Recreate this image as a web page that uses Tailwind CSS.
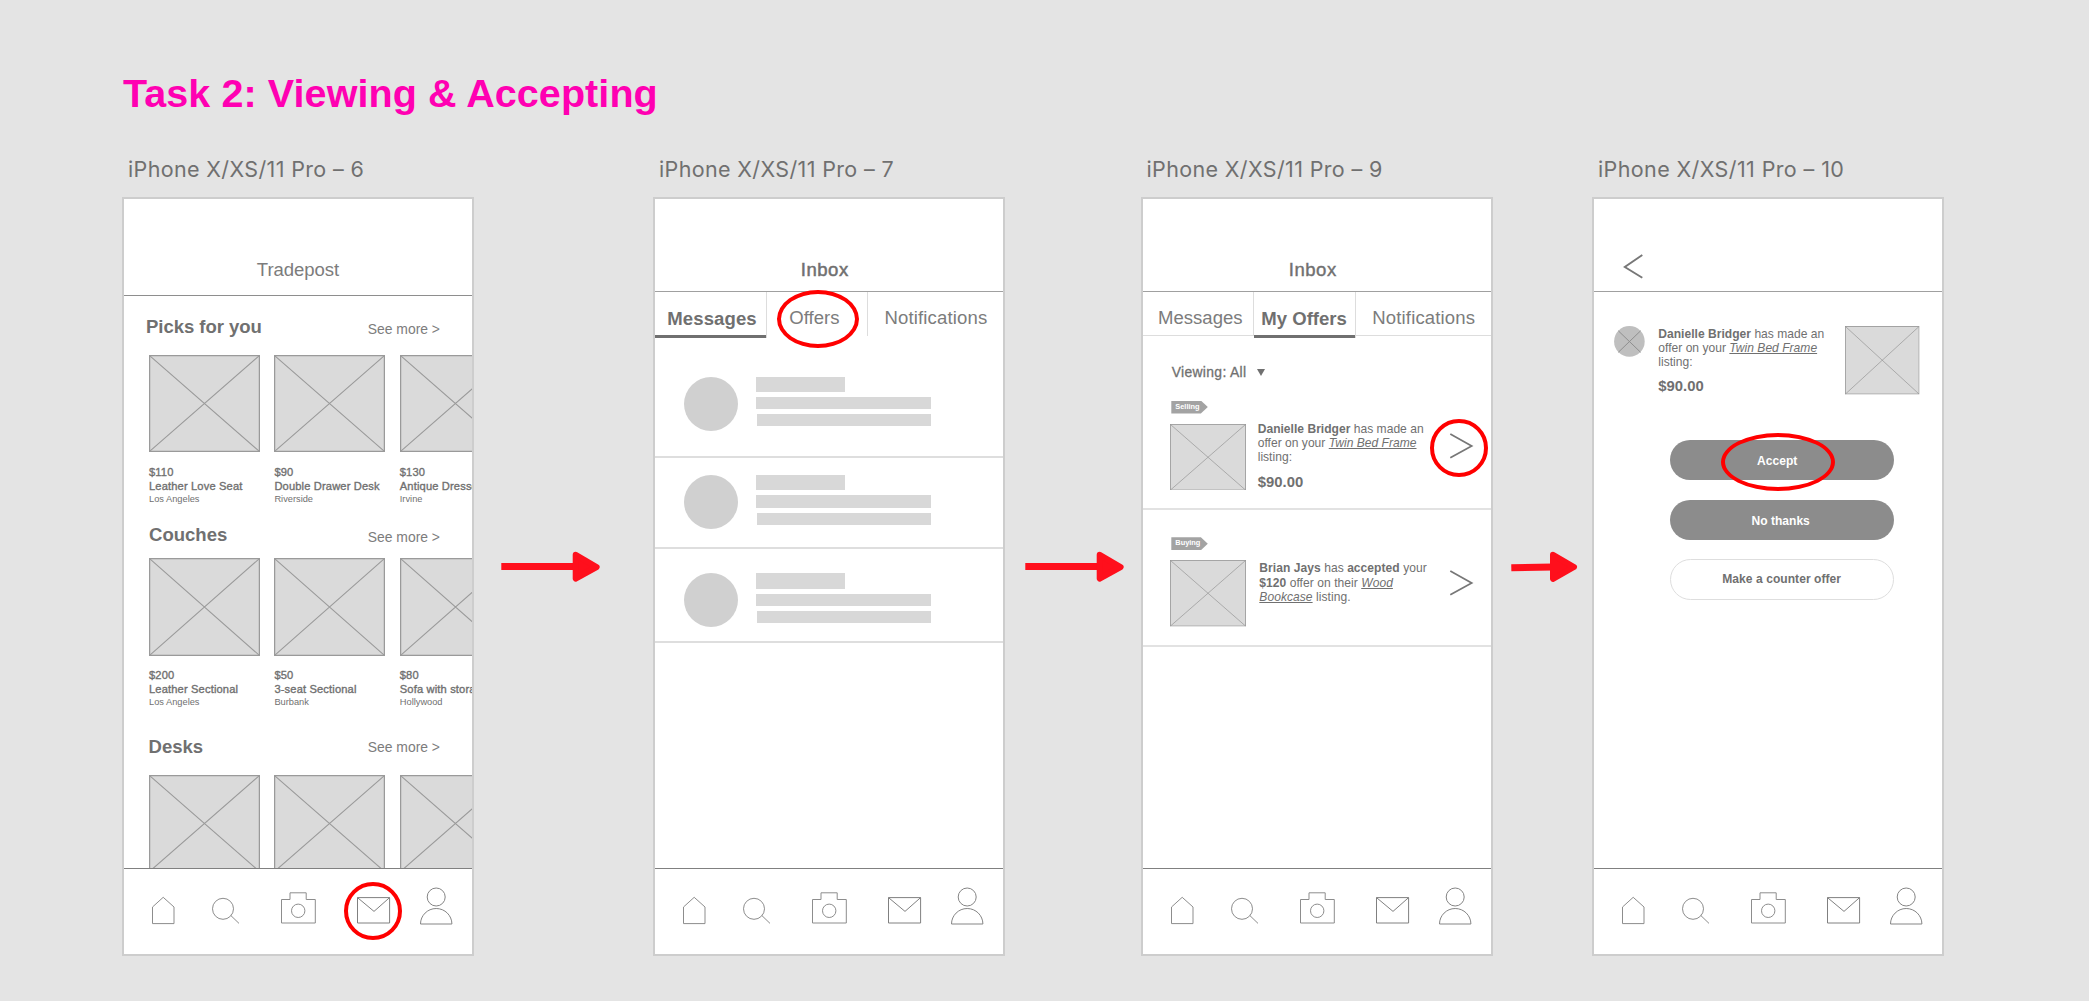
<!DOCTYPE html>
<html lang="en">
<head>
<meta charset="utf-8">
<title>Task 2: Viewing &amp; Accepting</title>
<script src="https://cdn.jsdelivr.net/npm/@tailwindcss/browser@4"></script>
</head>
<body class="w-[2089px] h-[1001px] overflow-hidden bg-[#e4e4e4] font-['Liberation_Sans',Arial,sans-serif] text-[#707070]">

<!-- shared shapes -->
<svg class="hidden">
  <symbol id="thumb" viewBox="0 0 111 97" preserveAspectRatio="none">
    <rect x=".6" y=".6" width="109.8" height="95.8" fill="#dadada" stroke="#9a9a9a" stroke-width="1.3"/>
    <path d="M.6 .6 110.4 96.4M110.4 .6 .6 96.4" stroke="#9a9a9a" stroke-width="1.1"/>
  </symbol>
  <symbol id="home" viewBox="26 16 26 44"><path d="M28.5 39 39.2 29.3 50 39V55.6H28.5Z" fill="none" stroke="#8d8d8d"/></symbol>
  <symbol id="search" viewBox="86 16 32 44"><g fill="none" stroke="#8d8d8d"><circle cx="99" cy="40.8" r="10.5"/><path d="M106.7 47.4 115 55.4"/></g></symbol>
  <symbol id="camera" viewBox="156 16 37 44"><g fill="none" stroke="#8d8d8d"><path d="M157.5 31.5H166V24.8H182.2V31.5H191.3V55H157.5Z"/><circle cx="174.2" cy="42.8" r="6.7"/></g></symbol>
  <symbol id="mail" viewBox="232 16 35 44"><path d="M233.5 29.6H265.6V55H233.5ZL250 43.4 265.6 29.6" fill="none" stroke="#808080"/></symbol>
  <symbol id="person" viewBox="295 16 34 44"><g fill="none" stroke="#858585"><circle cx="312.2" cy="29" r="9"/><path d="M296.5 56C296.5 47.5 303.5 40.5 312.2 40.5S327.9 47.5 327.9 56Z"/></g></symbol>
  <symbol id="chevron" viewBox="0 0 26 32"><path d="M2.3 4 23.7 16 2.3 27.7" fill="none" stroke="#777" stroke-width="1.7"/></symbol>
</svg>

<h1 class="mt-[69px] ml-[123px] text-[39.5px] leading-[48px] font-bold tracking-[0.08px] text-[#ff00b2]">Task 2: Viewing &amp; Accepting</h1>

<main class="mt-[38px] ml-[122px] flex items-start">

  <!-- artboard 6: home feed -->
  <section class="w-[352px] shrink-0">
    <h2 class="ml-[6px] whitespace-nowrap font-[Inter,sans-serif] text-[21.5px] leading-[28px] tracking-[0.36px]">iPhone X/XS/11 Pro – 6</h2>
    <div class="relative mt-[14px] flex h-[759px] flex-col border-2 border-[#cdcdcd] bg-white">
      <header class="h-[97px] shrink-0 border-b border-[#8e8e8e] pt-[59px] text-center text-[18.56px] leading-[24px] tracking-[-0.05px] text-[#7c7c7c]">Tradepost</header>
      <div class="min-h-0 flex-1 overflow-hidden">
        <div class="mt-[19px] flex h-[40px] justify-between pl-[22px] pr-[32px] leading-[24px]">
          <h3 class="text-[18.56px] font-bold tracking-[-0.05px]">Picks for you</h3><span class="pt-[2px] text-[13.92px] text-[#7c7c7c]">See more &gt;</span>
        </div>
        <div class="flex gap-[14.4px] pl-[25px] whitespace-nowrap text-[11.14px] leading-[14px] tracking-[0.15px]">
          <div class="w-[111px] shrink-0"><svg class="mb-[13px] block h-[97px] w-[111px]"><use href="#thumb"/></svg><p class="[-webkit-text-stroke:0.35px]">$110</p><p class="[-webkit-text-stroke:0.35px]">Leather Love Seat</p><p class="text-[9.28px] leading-[12px] tracking-normal">Los Angeles</p></div>
          <div class="w-[111px] shrink-0"><svg class="mb-[13px] block h-[97px] w-[111px]"><use href="#thumb"/></svg><p class="[-webkit-text-stroke:0.35px]">$90</p><p class="[-webkit-text-stroke:0.35px]">Double Drawer Desk</p><p class="text-[9.28px] leading-[12px] tracking-normal">Riverside</p></div>
          <div class="w-[111px] shrink-0"><svg class="mb-[13px] block h-[97px] w-[111px]"><use href="#thumb"/></svg><p class="[-webkit-text-stroke:0.35px]">$130</p><p class="[-webkit-text-stroke:0.35px]">Antique Dresser</p><p class="text-[9.28px] leading-[12px] tracking-normal">Irvine</p></div>
        </div>
        <div class="mt-[18px] flex h-[35px] justify-between pl-[25px] pr-[32px] leading-[24px]">
          <h3 class="text-[18.56px] font-bold">Couches</h3><span class="pt-[2px] text-[13.92px] text-[#7c7c7c]">See more &gt;</span>
        </div>
        <div class="flex gap-[14.4px] pl-[25px] whitespace-nowrap text-[11.14px] leading-[14px] tracking-[0.15px]">
          <div class="w-[111px] shrink-0"><svg class="mb-[12px] block h-[98px] w-[111px]"><use href="#thumb"/></svg><p class="[-webkit-text-stroke:0.35px]">$200</p><p class="[-webkit-text-stroke:0.35px]">Leather Sectional</p><p class="text-[9.28px] leading-[12px] tracking-normal">Los Angeles</p></div>
          <div class="w-[111px] shrink-0"><svg class="mb-[12px] block h-[98px] w-[111px]"><use href="#thumb"/></svg><p class="[-webkit-text-stroke:0.35px]">$50</p><p class="[-webkit-text-stroke:0.35px]">3-seat Sectional</p><p class="text-[9.28px] leading-[12px] tracking-normal">Burbank</p></div>
          <div class="w-[111px] shrink-0"><svg class="mb-[12px] block h-[98px] w-[111px]"><use href="#thumb"/></svg><p class="[-webkit-text-stroke:0.35px]">$80</p><p class="[-webkit-text-stroke:0.35px]">Sofa with storage</p><p class="text-[9.28px] leading-[12px] tracking-normal">Hollywood</p></div>
        </div>
        <div class="mt-[27px] flex h-[40px] justify-between pl-[24.5px] pr-[32px] leading-[24px]">
          <h3 class="text-[18.56px] font-bold">Desks</h3><span class="text-[13.92px] text-[#7c7c7c]">See more &gt;</span>
        </div>
        <div class="flex gap-[14.4px] pl-[25px]">
          <svg class="block h-[97px] w-[111px] shrink-0"><use href="#thumb"/></svg>
          <svg class="block h-[97px] w-[111px] shrink-0"><use href="#thumb"/></svg>
          <svg class="block h-[97px] w-[111px] shrink-0"><use href="#thumb"/></svg>
        </div>
      </div>
      <nav class="flex h-[86px] shrink-0 border-t border-[#808080] pt-[15px]">
        <svg class="ml-[26px] h-[44px] w-[26px]"><use href="#home"/></svg>
        <svg class="ml-[34px] h-[44px] w-[32px]"><use href="#search"/></svg>
        <svg class="ml-[38px] h-[44px] w-[37px]"><use href="#camera"/></svg>
        <svg class="ml-[39px] h-[44px] w-[35px]"><use href="#mail"/></svg>
        <svg class="ml-[28px] h-[44px] w-[34px]"><use href="#person"/></svg>
      </nav>
      <div class="absolute left-[220px] top-[683px] h-[58px] w-[58px] rounded-full border-4 border-[#ff0000]"></div>
    </div>
  </section>

  <svg class="mt-[392px] h-[40px] w-[179px] shrink-0" fill="#ff0f1c" stroke="#ff0f1c"><path d="M27.3 19.5H105" stroke-width="7" fill="none"/><path d="M101.7 7.8 122.6 20 101.7 31.5Z" stroke-width="6" stroke-linejoin="round"/></svg>

  <!-- artboard 7: inbox messages -->
  <section class="w-[352px] shrink-0">
    <h2 class="ml-[6px] whitespace-nowrap font-[Inter,sans-serif] text-[21.5px] leading-[28px] tracking-[0.36px]">iPhone X/XS/11 Pro – 7</h2>
    <div class="relative mt-[14px] flex h-[759px] flex-col border-2 border-[#cdcdcd] bg-white">
      <header class="h-[93px] shrink-0 border-b border-[#a0a0a0] pr-[8.5px] pt-[59px] text-center text-[18.56px] leading-[24px] tracking-[0.5px] [-webkit-text-stroke:0.5px]">Inbox</header>
      <div class="flex h-[46px] items-start text-[18.56px] leading-[24px] text-[#7c7c7c]">
        <div class="h-[46px] w-[112px] border-r border-[#dddddd]"><div class="h-[46px] border-b-3 border-[#707070] pl-[12.3px] pt-[15px] font-bold tracking-[0.1px] text-[#707070]">Messages</div></div>
        <div class="h-[44px] w-[101px] border-r border-[#dddddd] pl-[22.3px] pt-[14px]">Offers</div>
        <div class="pl-[16.5px] pt-[14px] tracking-[0.14px]">Notifications</div>
      </div>
      <div class="min-h-0 flex-1">
        <div class="flex h-[120px] border-b-2 border-[#dedede] pt-[39px] pl-[29px]">
          <div class="size-[54px] rounded-full bg-[#d0d0d0]"></div>
          <div class="ml-[18px]"><div class="h-[15px] w-[89px] bg-[#d8d8d8]"></div><div class="mt-[5px] h-[12px] w-[175px] bg-[#d8d8d8]"></div><div class="mt-[5px] ml-px h-[12px] w-[174px] bg-[#d8d8d8]"></div></div>
        </div>
        <div class="flex h-[91px] border-b-2 border-[#dedede] pt-[17px] pl-[29px]">
          <div class="size-[54px] rounded-full bg-[#d0d0d0]"></div>
          <div class="ml-[18px]"><div class="h-[15px] w-[89px] bg-[#d8d8d8]"></div><div class="mt-[5px] h-[13px] w-[175px] bg-[#d8d8d8]"></div><div class="mt-[5px] ml-px h-[12px] w-[174px] bg-[#d8d8d8]"></div></div>
        </div>
        <div class="flex h-[94px] border-b-2 border-[#dedede] pt-[24px] pl-[29px]">
          <div class="size-[54px] rounded-full bg-[#d0d0d0]"></div>
          <div class="ml-[18px]"><div class="h-[16px] w-[89px] bg-[#d8d8d8]"></div><div class="mt-[5px] h-[12px] w-[175px] bg-[#d8d8d8]"></div><div class="mt-[5px] ml-px h-[12px] w-[174px] bg-[#d8d8d8]"></div></div>
        </div>
      </div>
      <nav class="flex h-[86px] shrink-0 border-t border-[#808080] pt-[15px]">
        <svg class="ml-[26px] h-[44px] w-[26px]"><use href="#home"/></svg>
        <svg class="ml-[34px] h-[44px] w-[32px]"><use href="#search"/></svg>
        <svg class="ml-[38px] h-[44px] w-[37px]"><use href="#camera"/></svg>
        <svg class="ml-[39px] h-[44px] w-[35px]"><use href="#mail"/></svg>
        <svg class="ml-[28px] h-[44px] w-[34px]"><use href="#person"/></svg>
      </nav>
      <div class="absolute left-[122px] top-[91px] h-[58px] w-[82px] rounded-[50%] border-4 border-[#ff0000]"></div>
    </div>
  </section>

  <svg class="mt-[392px] h-[40px] w-[136px] shrink-0" fill="#ff0f1c" stroke="#ff0f1c"><path d="M20.3 19.5H98" stroke-width="7" fill="none"/><path d="M94.7 7.8 115.6 20 94.7 31.5Z" stroke-width="6" stroke-linejoin="round"/></svg>

  <!-- artboard 9: inbox offers -->
  <section class="w-[352px] shrink-0">
    <h2 class="ml-[5.5px] whitespace-nowrap font-[Inter,sans-serif] text-[21.5px] leading-[28px] tracking-[0.36px]">iPhone X/XS/11 Pro – 9</h2>
    <div class="relative mt-[14px] flex h-[759px] flex-col border-2 border-[#cdcdcd] bg-white">
      <header class="h-[93px] shrink-0 border-b border-[#a0a0a0] pr-[8.5px] pt-[59px] text-center text-[18.56px] leading-[24px] tracking-[0.5px] [-webkit-text-stroke:0.4px]">Inbox</header>
      <div class="flex h-[46px] items-start text-[18.56px] leading-[24px] text-[#7c7c7c]">
        <div class="h-[44px] w-[111px] border-r border-b border-[#dddddd] pl-[15px] pt-[14px]">Messages</div>
        <div class="h-[46px] w-[102px] border-r border-[#dddddd]"><div class="h-[46px] whitespace-nowrap border-b-3 border-[#707070] pl-[7.3px] pt-[15px] font-bold text-[#707070]">My Offers</div></div>
        <div class="h-[44px] flex-1 border-b border-[#dddddd] pl-[16.3px] pt-[14px] tracking-[0.14px]">Notifications</div>
      </div>
      <div class="min-h-0 flex-1">
        <div class="mt-[24px] flex items-center pl-[28.7px] text-[13.92px] leading-[20px] tracking-[0.32px] [-webkit-text-stroke:0.3px]">Viewing: All<svg class="ml-[10.5px] h-[7px] w-[8px]" fill="#707070"><path d="M0 0H8L4 7Z"/></svg></div>
        <div class="h-[128px] border-b-2 border-[#e2e2e2] pt-[18.6px]">
          <div class="ml-[28.3px] h-[13px] w-[36.5px] bg-[#a3a3a3] pl-[4px] text-[7.42px] leading-[11px] font-bold text-white [clip-path:polygon(0_0,81%_0,100%_50%,81%_100%,0_100%)]">Selling</div>
          <div class="mt-[10px] flex">
            <svg class="ml-[27.3px] h-[66.5px] w-[76px] shrink-0"><use href="#thumb"/></svg>
            <div class="-mt-[2px] ml-[11.4px] whitespace-nowrap text-[12.06px] leading-[14.4px] tracking-[0.02px]"><p><b>Danielle Bridger</b> has made an<br>offer on your <i class="underline">Twin Bed Frame</i><br>listing:</p><p class="mt-[7px] text-[14.85px] leading-[20px] font-bold">$90.00</p></div>
            <svg class="mt-[6px] mr-[17px] ml-auto h-[32px] w-[26px] shrink-0"><use href="#chevron"/></svg>
          </div>
        </div>
        <div class="h-[137px] border-b-2 border-[#e2e2e2] pt-[27.2px]">
          <div class="ml-[28.3px] h-[13px] w-[36.5px] bg-[#a3a3a3] pl-[4px] text-[7.42px] leading-[11px] font-bold text-white [clip-path:polygon(0_0,81%_0,100%_50%,81%_100%,0_100%)]">Buying</div>
          <div class="mt-[10px] flex">
            <svg class="ml-[27.3px] h-[66.5px] w-[76px] shrink-0"><use href="#thumb"/></svg>
            <div class="mt-px ml-[13px] whitespace-nowrap text-[12.06px] leading-[14.4px] tracking-[0.05px]"><p><b>Brian Jays</b> has <b>accepted</b> your<br><b>$120</b> offer on their <i class="underline">Wood</i><br><i class="underline">Bookcase</i> listing.</p></div>
            <svg class="mt-[6.5px] mr-[17px] ml-auto h-[32px] w-[26px] shrink-0"><use href="#chevron"/></svg>
          </div>
        </div>
      </div>
      <nav class="flex h-[86px] shrink-0 border-t border-[#808080] pt-[15px]">
        <svg class="ml-[26px] h-[44px] w-[26px]"><use href="#home"/></svg>
        <svg class="ml-[34px] h-[44px] w-[32px]"><use href="#search"/></svg>
        <svg class="ml-[38px] h-[44px] w-[37px]"><use href="#camera"/></svg>
        <svg class="ml-[39px] h-[44px] w-[35px]"><use href="#mail"/></svg>
        <svg class="ml-[28px] h-[44px] w-[34px]"><use href="#person"/></svg>
      </nav>
      <div class="absolute left-[287px] top-[220px] h-[58px] w-[58px] rounded-full border-4 border-[#ff0000]"></div>
    </div>
  </section>

  <svg class="mt-[392px] h-[40px] w-[99px] shrink-0" fill="#ff0f1c" stroke="#ff0f1c"><path d="M18.3 20.8 60 20" stroke-width="7" fill="none"/><path d="M60 7.8 81 20 60 31.8Z" stroke-width="6" stroke-linejoin="round"/></svg>

  <!-- artboard 10: offer detail -->
  <section class="w-[352px] shrink-0">
    <h2 class="ml-[6px] whitespace-nowrap font-[Inter,sans-serif] text-[21.5px] leading-[28px] tracking-[0.39px]">iPhone X/XS/11 Pro – 10</h2>
    <div class="relative mt-[14px] flex h-[759px] flex-col border-2 border-[#cdcdcd] bg-white">
      <header class="h-[93px] shrink-0 border-b border-[#a0a0a0] pt-[54px] pl-[28px]">
        <svg class="h-[28px] w-[22px]" fill="none" stroke="#777" stroke-width="1.9"><path d="M20.3 2 2.8 14 20.3 24.7"/></svg>
      </header>
      <div class="min-h-0 flex-1">
        <div class="mt-[34px] flex h-[69px] items-start">
          <svg class="ml-[20.3px] size-[31px] shrink-0" stroke="#8f8f8f"><circle cx="15.4" cy="15.4" r="15.3" fill="#bfbfbf" stroke="none"/><path d="M4.3 4.8 26.6 26.3M26.6 4.8 4.3 26.3"/></svg>
          <div class="mt-[0.6px] ml-[13px] whitespace-nowrap text-[12.06px] leading-[14.4px] tracking-[0.02px]"><p><b>Danielle Bridger</b> has made an<br>offer on your <i class="underline">Twin Bed Frame</i><br>listing:</p><p class="mt-[6.4px] text-[14.85px] leading-[20px] font-bold">$90.00</p></div>
          <svg class="mr-[22.5px] ml-auto h-[68.5px] w-[74.5px] shrink-0"><use href="#thumb"/></svg>
        </div>
        <div class="mt-[45px] ml-[75.7px] flex w-[224px] flex-col gap-[19.5px] text-center text-[12.06px] leading-[40px] font-bold">
          <div class="h-[40px] rounded-full bg-[#8c8c8c] pt-px pr-[9px] text-white">Accept</div>
          <div class="h-[40px] rounded-full bg-[#8c8c8c] pt-px pr-[2px] text-white">No thanks</div>
          <div class="h-[41px] rounded-full border border-[#dedede] leading-[38px] tracking-[0.05px]">Make a counter offer</div>
        </div>
      </div>
      <nav class="flex h-[86px] shrink-0 border-t border-[#808080] pt-[15px]">
        <svg class="ml-[26px] h-[44px] w-[26px]"><use href="#home"/></svg>
        <svg class="ml-[34px] h-[44px] w-[32px]"><use href="#search"/></svg>
        <svg class="ml-[38px] h-[44px] w-[37px]"><use href="#camera"/></svg>
        <svg class="ml-[39px] h-[44px] w-[35px]"><use href="#mail"/></svg>
        <svg class="ml-[28px] h-[44px] w-[34px]"><use href="#person"/></svg>
      </nav>
      <div class="absolute left-[127px] top-[234px] h-[58px] w-[114px] rounded-[50%] border-4 border-[#ff0000]"></div>
    </div>
  </section>
</main>
</body>
</html>
